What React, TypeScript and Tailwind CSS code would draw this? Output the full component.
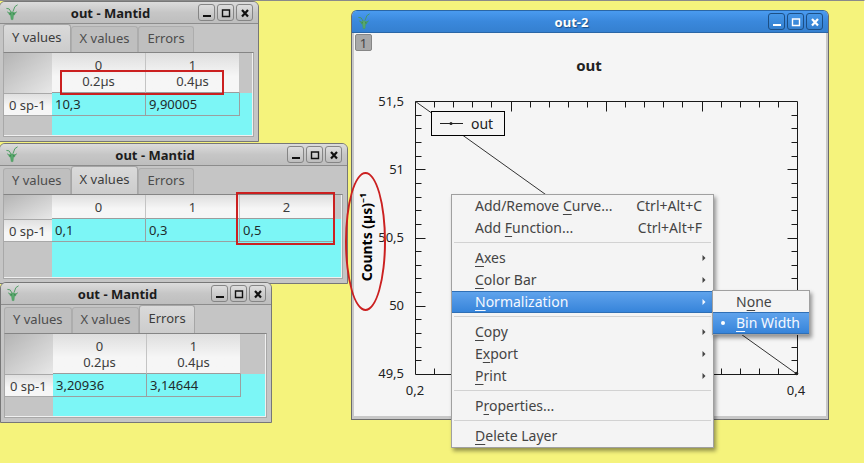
import type { ReactNode } from "react";

type Grid = {
  columns: { index: string; unit?: string }[];
  values: string[];
};

const TABS = ["Y values", "X values", "Errors"];

function MantidIcon() {
  return (
    <svg viewBox="0 0 14 17" className="h-[17px] w-[14px] shrink-0" fill="none" stroke="#459a5b" aria-hidden="true">
      <path d="M12.6 0.8 Q9.4 1.2 8 7.5" strokeWidth="0.9" />
      <path d="M1.4 4.4 Q4.6 3.6 6 8" strokeWidth="0.9" />
      <path d="M2.2 7.8 L4.2 9.2 M11.8 7.8 L9.6 9.2" strokeWidth="0.9" />
      <path d="M3.8 9 L6 8 H8 L10.2 9 L9.6 10.8 L8.4 11.6 L8 15.6 H6.2 L5.6 11.6 L4.4 10.8 Z" fill="#58a86c" strokeWidth="0.5" />
      <circle cx="5.2" cy="9.8" r="0.6" fill="#2b6b3c" stroke="none" />
      <circle cx="8.8" cy="9.8" r="0.6" fill="#2b6b3c" stroke="none" />
    </svg>
  );
}

function WindowButtons({ active }: { active?: boolean }) {
  const look = active
    ? "border-[#1c4f85] bg-linear-to-b from-[#4596e8] to-[#3480cf] text-white"
    : "border-[#858585] bg-linear-to-b from-[#dedede] to-[#bdbdbd] text-[#111111]";
  const glyphs: [string, ReactNode][] = [
    ["Minimize", <path key="m" d="M1 8 H9" strokeWidth="2" />],
    ["Maximize", <path key="x" d="M1.5 2 V8.5 H8.5 V2 Z M1 2 H9" strokeWidth="1.4" />],
    ["Close", <path key="c" d="M2 2 L8 8.5 M8 2 L2 8.5" strokeWidth="2.2" />],
  ];
  return (
    <div className="flex gap-[2px]">
      {glyphs.map(([name, glyph]) => (
        <button key={name} type="button" aria-label={name} className={`flex h-[17px] w-[17px] items-center justify-center rounded-[3px] border ${look}`}>
          <svg viewBox="0 0 10 10" className="h-[10px] w-[10px]" fill="none" stroke="currentColor">
            {glyph}
          </svg>
        </button>
      ))}
    </div>
  );
}

function TitleBar({ title, active }: { title: string; active?: boolean }) {
  const look = active
    ? "border-[#2a66a6] bg-linear-to-b from-[#4a9bf0] via-[#3a88dc] to-[#3580d0] text-white [text-shadow:1px_1px_1px_#1c4f85]"
    : "border-[#8c8c8c] bg-linear-to-b from-[#dcdcdc] via-[#c6c6c6] to-[#bebebe] text-[#1c1c1c]";
  return (
    <header className={`flex h-[22px] items-center justify-between rounded-t-[5px] border-b px-[5px] ${look}`}>
      <MantidIcon />
      <h2 className="flex-1 pl-1 text-center text-[13px] leading-5 font-bold">{title}</h2>
      <WindowButtons active={active} />
    </header>
  );
}

function MatrixWindow({ place, tab, grid, filler }: { place: string; tab: string; grid: Grid; filler: string }) {
  const twoLines = grid.columns.some((c) => c.unit);
  const head = "border-r border-[#c4c4c4] bg-linear-to-b from-[#dedede] to-[#f6f6f6] to-60%";
  return (
    <section className={`absolute rounded-t-[6px] border border-[#777777] bg-[#c5c5c5] text-[13px] text-[#3c3c3c] ${place}`}>
      <TitleBar title="out - Mantid" />
      <div role="tablist" className="flex h-[28px] items-end pl-[3px]">
        {TABS.map((name) => (
          <button
            key={name}
            type="button"
            role="tab"
            aria-selected={name === tab}
            className={`rounded-t-[3px] border border-b-0 px-2 pb-[4px] leading-[20px] ${
              name === tab ? "h-[28px] border-[#a6a6a6] bg-linear-to-b from-[#dadada] to-[#cccccc]" : "h-[26px] border-[#adadad] bg-[#bfbfbf] text-[#4c4c4c]"
            }`}
          >
            {name}
          </button>
        ))}
      </div>
      <div className="mr-[4px] ml-[3px] mb-[4px] border border-[#a8a8a8] border-t-[#858585]">
        <table className="w-full table-fixed border-separate border-spacing-0 border-r border-b border-[#f0f0f0] bg-[#7cf6f6]">
          <colgroup>
            <col className="w-[48px]" />
            {grid.columns.map((c) => (
              <col key={c.index} className="w-[94px]" />
            ))}
            <col />
          </colgroup>
          <thead>
            <tr className={twoLines ? "h-[40px]" : "h-[24px]"}>
              <td className="bg-linear-to-br from-[#b4b4b4] to-[#e8e8e8] p-0" />
              {grid.columns.map((c) => (
                <th key={c.index} scope="col" className={`border-b border-b-[#9c9c9c] p-0 text-center leading-[16px] font-normal ${head}`}>
                  {c.index}
                  {c.unit && <span className="block">{c.unit}</span>}
                </th>
              ))}
              <td className="bg-[#c5c5c5] p-0" />
            </tr>
          </thead>
          <tbody>
            <tr className="h-[23px]">
              <th scope="row" className="border-t border-b border-[#a8a8a8] bg-linear-to-b from-[#e0e0e0] to-[#f6f6f6] to-60% p-0 pl-[5px] text-left leading-[16px] font-normal whitespace-nowrap">
                0 sp-1
              </th>
              {grid.values.map((v) => (
                <td key={v} className="border-r border-b border-[#9aa0a0] p-0 pl-[3px] leading-[16px] text-[#1f2c2c]">
                  {v}
                </td>
              ))}
              <td className="p-0" />
            </tr>
            <tr className={filler}>
              <td className="bg-[#c5c5c5] p-0" />
              <td colSpan={grid.columns.length + 1} className="p-0" />
            </tr>
          </tbody>
        </table>
      </div>
    </section>
  );
}

const PLOT = { left: 61.5, right: 443.5, top: 68.5, bottom: 341.5 };

function Plot() {
  const { left, right, top, bottom } = PLOT;
  const ticks: string[] = [];
  for (let i = 1; i < 20; i++) {
    const len = i % 5 === 0 ? 10 : 6;
    const x = Math.floor(left + ((right - left) * i) / 20) + 0.5;
    const y = Math.floor(top + ((bottom - top) * i) / 20) + 0.5;
    ticks.push(`M${x} ${top} v${len} M${x} ${bottom} v${-len} M${left} ${y} h${len} M${right} ${y} h${-len}`);
  }
  const labels: [string, number][] = [
    ["51,5", 73],
    ["51", 141],
    ["50,5", 209],
    ["50", 277],
    ["49,5", 345],
  ];
  return (
    <svg viewBox="0 0 471 383" className="h-[383px] w-[471px]" fontSize="13" fill="#222222" role="img" aria-label="out">
      <text x="235" y="38" fontSize="15" fontWeight="700" textAnchor="middle">out</text>
      <g stroke="#1a1a1a" fill="none">
        <path d={`M${left} ${top} H${right} V${bottom} H${left} Z`} />
        <path d={ticks.join(" ")} />
        <path d={`M${left} ${top} L${right} ${bottom}`} stroke="#333333" />
      </g>
      <circle cx={right - 1} cy={bottom - 1} r="1.8" />
      {labels.map(([t, y]) => (
        <text key={t} x="50" y={y} textAnchor="end">{t}</text>
      ))}
      <text x="61" y="362" textAnchor="middle">0,2</text>
      <text x="442" y="362" textAnchor="middle">0,4</text>
      <text transform="translate(18 204) rotate(-90)" fontSize="14" fontWeight="700" textAnchor="middle" fill="#000000">Counts (µs)⁻¹</text>
      <rect x="77.5" y="78.5" width="73" height="24" fill="#f5f5f5" stroke="#000000" />
      <path d="M86 90.5 H109" stroke="#222222" />
      <circle cx="97" cy="90.5" r="1.5" />
      <text x="117" y="96" fontSize="14">out</text>
    </svg>
  );
}

function PlotWindow() {
  return (
    <section className="absolute top-[10px] left-[351px] w-[478px] rounded-t-[6px] border border-[#6c6c6c] border-t-[#2a66a6] bg-[#c8c8c8]">
      <TitleBar title="out-2" active />
      <div className="mx-[2px] mb-[3px] bg-[#f5f5f5]">
        <div className="relative">
          <button type="button" className="absolute top-[1px] left-[1px] h-[17px] w-[17px] rounded-[2px] border border-[#868686] bg-[#a8a8a8] text-[13px] leading-[14px] text-[#444444]">
            1
          </button>
          <Plot />
        </div>
      </div>
    </section>
  );
}

type Item = { before: string; key: string; after: string; shortcut?: string; sub?: boolean; active?: boolean };

const MENU: Item[][] = [
  [
    { before: "Add/Remove ", key: "C", after: "urve...", shortcut: "Ctrl+Alt+C" },
    { before: "Add ", key: "F", after: "unction...", shortcut: "Ctrl+Alt+F" },
  ],
  [
    { before: "", key: "A", after: "xes", sub: true },
    { before: "", key: "C", after: "olor Bar", sub: true },
    { before: "", key: "N", after: "ormalization", sub: true, active: true },
  ],
  [
    { before: "", key: "C", after: "opy", sub: true },
    { before: "E", key: "x", after: "port", sub: true },
    { before: "", key: "P", after: "rint", sub: true },
  ],
  [{ before: "P", key: "r", after: "operties..." }],
  [{ before: "", key: "D", after: "elete Layer" }],
];

const HIGHLIGHT = "border-[#2f6fb5] bg-linear-to-b from-[#5fa3ec] to-[#3684da] text-[#f4f8ff]";

function Label({ before, keyChar, after }: { before: string; keyChar: string; after: string }) {
  return (
    <span>
      {before}
      <u className="underline-offset-[3px]">{keyChar}</u>
      {after}
    </span>
  );
}

function ContextMenu() {
  return (
    <div role="menu" className="absolute top-[194px] left-[451px] w-[263px] border border-[#a0a0a0] bg-[#f4f4f4] text-[14px] text-[#444444] shadow-[2px_3px_4px_rgba(0,0,0,0.4)]">
      {MENU.map((group, i) => (
        <div key={i}>
          {i > 0 && <div role="separator" className="mx-[2px] mt-[3px] mb-[4px] h-px bg-[#d2d2d2]" />}
          {group.map((item) => (
            <button
              key={item.before + item.key + item.after}
              type="button"
              role="menuitem"
              className={`flex h-[22px] w-full items-center justify-between border-y pr-[7px] pl-[23px] leading-[20px] whitespace-nowrap ${item.active ? HIGHLIGHT : "border-transparent"}`}
            >
              <Label before={item.before} keyChar={item.key} after={item.after} />
              {item.shortcut && <span className="pr-[4px]">{item.shortcut}</span>}
              {item.sub && (
                <svg viewBox="0 0 4 6" className="h-[6px] w-[4px]" fill="currentColor" aria-hidden="true">
                  <path d="M0.5 0 L3.5 3 L0.5 6 Z" />
                </svg>
              )}
            </button>
          ))}
        </div>
      ))}
    </div>
  );
}

function NormalizationMenu() {
  return (
    <div role="menu" className="absolute top-[290px] left-[712px] w-[98px] border border-[#a0a0a0] bg-[#f4f4f4] text-[14px] text-[#444444] shadow-[2px_3px_4px_rgba(0,0,0,0.4)]">
      <button type="button" role="menuitemradio" aria-checked="false" className="flex h-[21px] w-full items-center pl-[23px] leading-[20px]">
        <Label before="N" keyChar="o" after="ne" />
      </button>
      <button type="button" role="menuitemradio" aria-checked="true" className={`flex h-[22px] w-full items-center gap-[11px] border-y pl-2 leading-[20px] whitespace-nowrap ${HIGHLIGHT}`}>
        <span className="h-1 w-1 rounded-full bg-white" />
        <Label before="" keyChar="B" after="in Width" />
      </button>
    </div>
  );
}

export default function App() {
  return (
    <main className="relative min-h-screen w-full overflow-hidden border-t border-r border-b border-t-[#8a8a8a] border-r-white border-b-white bg-[#f5f37c] font-['Noto_Sans',sans-serif]">
      <div className="absolute inset-0 -top-px">
        <MatrixWindow
          place="top-[1px] left-[-1px] w-[260px]"
          tab="Y values"
          filler="h-[19px]"
          grid={{ columns: [{ index: "0", unit: "0.2µs" }, { index: "1", unit: "0.4µs" }], values: ["10,3", "9,90005"] }}
        />
        <MatrixWindow
          place="top-[143px] left-[-1px] w-[349px]"
          tab="X values"
          filler="h-[35px]"
          grid={{ columns: [{ index: "0" }, { index: "1" }, { index: "2" }], values: ["0,1", "0,3", "0,5"] }}
        />
        <MatrixWindow
          place="top-[282px] left-0 w-[272px]"
          tab="Errors"
          filler="h-[19px]"
          grid={{ columns: [{ index: "0", unit: "0.2µs" }, { index: "1", unit: "0.4µs" }], values: ["3,20936", "3,14644"] }}
        />
        <PlotWindow />
        <ContextMenu />
        <NormalizationMenu />
        <div className="absolute top-[70px] left-[60px] h-[25px] w-[164px] border-2 border-[#cb2020]" />
        <div className="absolute top-[192px] left-[236px] h-[53px] w-[99px] border-2 border-[#cb2020]" />
        <div className="absolute top-[172px] left-[345px] h-[139px] w-[41px] rounded-[50%] border-2 border-[#cb2020]" />
      </div>
    </main>
  );
}
